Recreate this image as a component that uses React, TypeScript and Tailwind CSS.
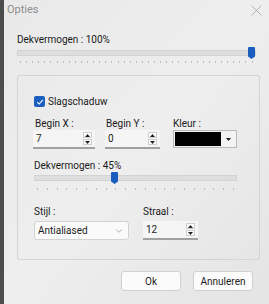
import { X, ChevronDown } from "lucide-react";

const font = { fontFamily: 'Roboto, "Liberation Sans", sans-serif' };

function Ticks({ count }: { count: number }) {
  return (
    <div className="flex justify-between px-[3px] h-[2px]">
      {Array.from({ length: count }).map((_, i) => (
        <span key={i} className="w-px h-[2px] bg-[#b9b9b9]" />
      ))}
    </div>
  );
}

function Slider({ pct, ticks, gap }: { pct: number; ticks: number; gap: string }) {
  return (
    <div className={`flex flex-col ${gap}`}>
      <div className="relative h-[12px] flex items-center">
        <div className="w-full h-[6px] bg-[#dedede] border border-[#d2d2d2]" />
        <div
          className="absolute top-0 w-[7px] h-[12px] bg-[#1a5fbf] rounded-t-[1px] [clip-path:polygon(0_0,100%_0,100%_80%,50%_100%,0_80%)]"
          style={{ left: `calc(${pct}% - ${(pct / 100) * 8}px)` }}
        />
      </div>
      <Ticks count={ticks} />
    </div>
  );
}

function Spin({ value, width }: { value: string; width: string }) {
  return (
    <div className={`${width} h-[19px] flex items-center bg-[#f5f5f5] border-b-2 border-[#a0a0a0] pl-[3px]`}>
      <span className="flex-1 text-[10px] text-[#1b1b1b]">{value}</span>
      <div className="flex flex-col gap-px mr-[3px]">
        <span className="w-[9px] h-[6px] bg-white border border-[#cdcdcd] flex items-center justify-center">
          <svg width="5" height="3" viewBox="0 0 5 3">
            <path d="M0 3 H5 L2.5 0 Z" fill="#222" />
          </svg>
        </span>
        <span className="w-[9px] h-[6px] bg-white border border-[#cdcdcd] flex items-center justify-center">
          <svg width="5" height="3" viewBox="0 0 5 3">
            <path d="M0 0 H5 L2.5 3 Z" fill="#222" />
          </svg>
        </span>
      </div>
    </div>
  );
}

export default function App() {
  return (
    <div className="w-[269px] h-[304px] flex bg-[#4d4d4d] overflow-hidden" style={font}>
      <div className="w-[4px]" />
      <div className="flex-1 flex flex-col bg-gradient-to-br from-[#e9e9e9] via-[#eeeeee] to-[#e4e4e4]">
        {/* title */}
        <div className="h-[20px] flex items-center justify-between pl-[3px] pr-[3px]">
          <span className="text-[11px] text-[#8e8e8e]">Opties</span>
          <X size={19} strokeWidth={0.8} className="text-[#8e8e8e]" />
        </div>

        <div className="pl-[13px] pr-[9px] pt-[13px] flex flex-col">
          <span className="text-[10px] text-[#1b1b1b] leading-[14px]">Dekvermogen : 100%</span>
          <div className="mr-[4px]">
            <Slider pct={100} ticks={39} gap="gap-[2px]" />
          </div>

          {/* group box */}
          <div className="mt-[12px] border border-[#d4d4d4] rounded-[2px] h-[185px] pl-[16px] pt-[20px] flex flex-col">
            <div className="flex items-center gap-[3px] h-[11px]">
              <span className="w-[11px] h-[11px] bg-[#1a5fbf] rounded-[2px] flex items-center justify-center">
                <svg width="8" height="8" viewBox="0 0 8 8">
                  <path d="M1.2 4.2 L3.2 6 L6.8 1.9" fill="none" stroke="white" strokeWidth="1.1" />
                </svg>
              </span>
              <span className="text-[10px] text-[#1b1b1b]">Slagschaduw</span>
            </div>

            <div className="mt-[11px] flex items-start -ml-px">
              <div className="flex flex-col w-[72px]">
                <span className="text-[10px] leading-[12px] text-[#1b1b1b] pl-[2px]">Begin X :</span>
                <Spin value="7" width="w-[62px]" />
              </div>
              <div className="flex flex-col w-[68px]">
                <span className="text-[10px] leading-[12px] text-[#1b1b1b] pl-[1px]">Begin Y :</span>
                <Spin value="0" width="w-[55px]" />
              </div>
              <div className="flex flex-col">
                <span className="text-[10px] leading-[12px] text-[#1b1b1b]">Kleur :</span>
                <div className="w-[64px] h-[18px] border border-[#b9b9b9] bg-[#f3f3f3] flex items-center p-px gap-[1px]">
                  <div className="w-[46px] h-full bg-black" />
                  <div className="flex-1 h-full flex items-center justify-center">
                    <svg width="5" height="3" viewBox="0 0 5 3">
                      <path d="M0 0 H5 L2.5 3 Z" fill="#222" />
                    </svg>
                  </div>
                </div>
              </div>
            </div>

            <span className="mt-[11px] text-[10px] leading-[12px] text-[#1b1b1b]">Dekvermogen : 45%</span>
            <div className="w-[203px]">
              <Slider pct={39.5} ticks={21} gap="gap-[4px]" />
            </div>

            <div className="mt-[16px] flex items-start">
              <div className="flex flex-col w-[109px]">
                <span className="text-[10px] leading-[12px] text-[#1b1b1b] mb-[3px]">Stijl :</span>
                <div className="w-[95px] h-[19px] bg-[#fafafa] border border-[#d2d2d2] rounded-[3px] flex items-center justify-between pl-[3px] pr-[4px]">
                  <span className="text-[10px] text-[#1b1b1b]">Antialiased</span>
                  <ChevronDown size={10} strokeWidth={1.3} className="text-[#707070]" />
                </div>
              </div>
              <div className="flex flex-col">
                <span className="text-[10px] leading-[12px] text-[#1b1b1b] mb-[3px]">Straal :</span>
                <Spin value="12" width="w-[55px]" />
              </div>
            </div>
          </div>

          {/* buttons */}
          <div className="mt-[11px] flex justify-end gap-[12px] pr-[7px]">
            <button className="w-[60px] h-[20px] bg-[#fbfbfb] border border-[#d0d0d0] rounded-[3px] text-[10px] text-[#1b1b1b]">Ok</button>
            <button className="w-[60px] h-[20px] bg-[#fbfbfb] border border-[#d0d0d0] rounded-[3px] text-[10px] text-[#1b1b1b]">Annuleren</button>
          </div>
        </div>
      </div>
    </div>
  );
}
